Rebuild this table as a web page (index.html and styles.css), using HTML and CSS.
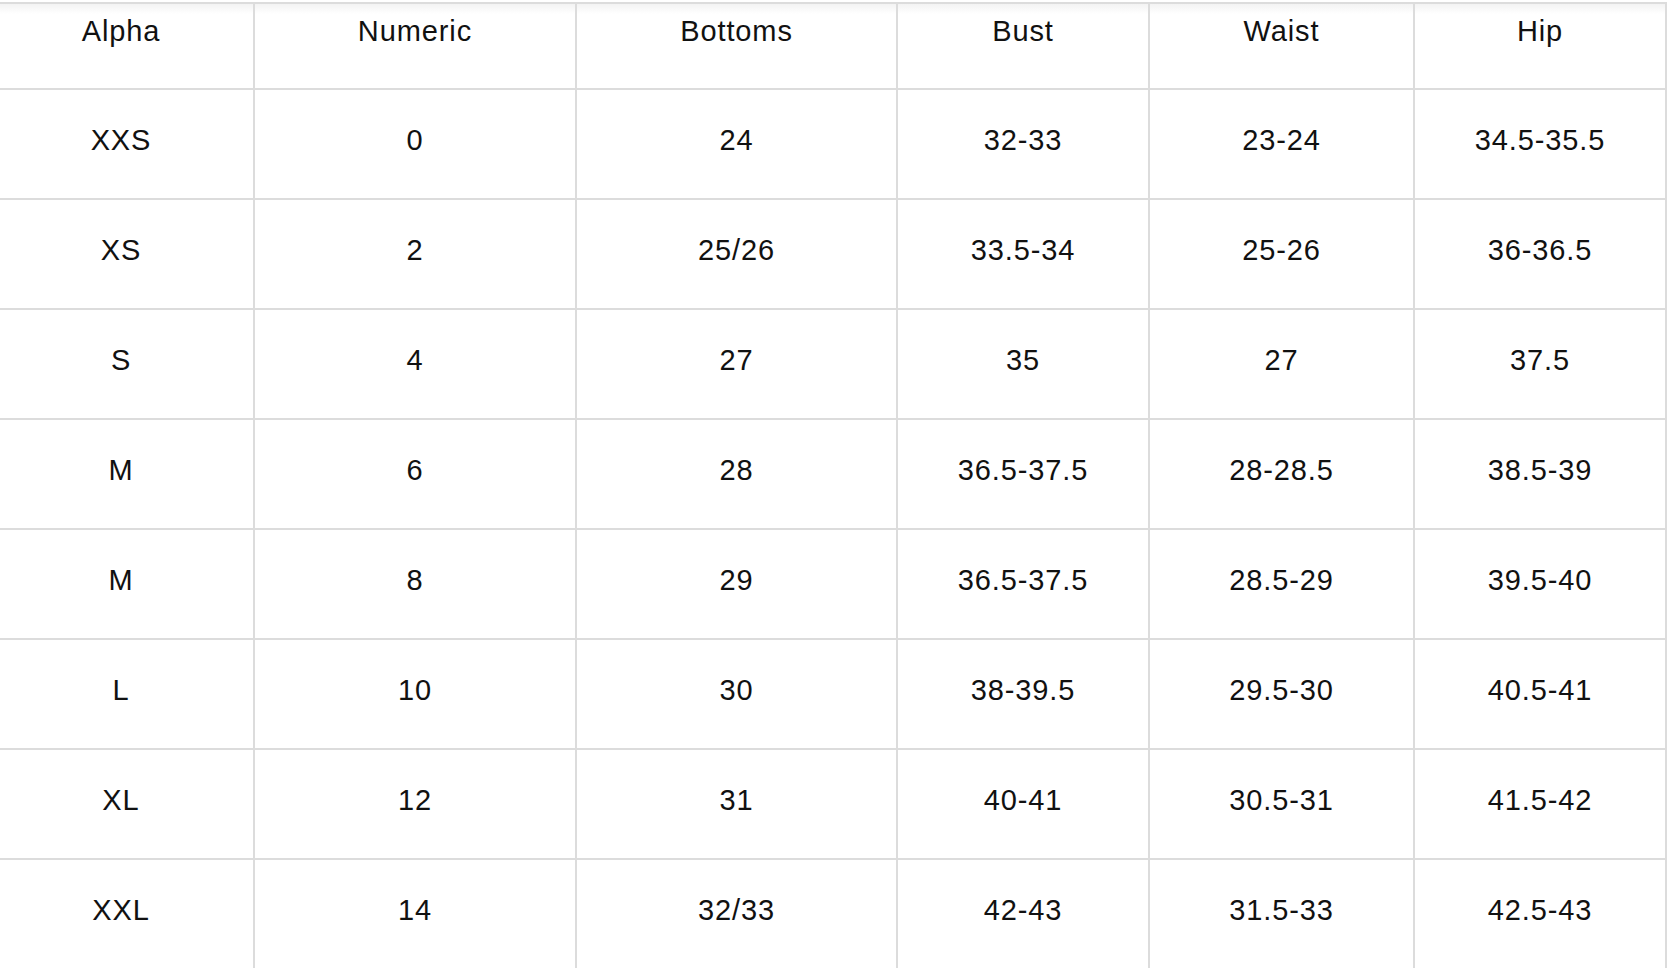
FILE: index.html
```html
<!DOCTYPE html>
<html lang="en">
<head>
<meta charset="utf-8">
<title>Size chart</title>
<link rel="stylesheet" href="styles.css">
</head>
<body>
<div class="wrap">
<table class="chart">
  <colgroup>
    <col class="c1"><col class="c2"><col class="c3"><col class="c4"><col class="c5"><col class="c6">
  </colgroup>
  <thead>
    <tr><th>Alpha</th><th>Numeric</th><th>Bottoms</th><th>Bust</th><th>Waist</th><th>Hip</th></tr>
  </thead>
  <tbody>
    <tr><td>XXS</td><td>0</td><td>24</td><td>32-33</td><td>23-24</td><td>34.5-35.5</td></tr>
    <tr><td>XS</td><td>2</td><td>25/26</td><td>33.5-34</td><td>25-26</td><td>36-36.5</td></tr>
    <tr><td>S</td><td>4</td><td>27</td><td>35</td><td>27</td><td>37.5</td></tr>
    <tr><td>M</td><td>6</td><td>28</td><td>36.5-37.5</td><td>28-28.5</td><td>38.5-39</td></tr>
    <tr><td>M</td><td>8</td><td>29</td><td>36.5-37.5</td><td>28.5-29</td><td>39.5-40</td></tr>
    <tr><td>L</td><td>10</td><td>30</td><td>38-39.5</td><td>29.5-30</td><td>40.5-41</td></tr>
    <tr><td>XL</td><td>12</td><td>31</td><td>40-41</td><td>30.5-31</td><td>41.5-42</td></tr>
    <tr><td>XXL</td><td>14</td><td>32/33</td><td>42-43</td><td>31.5-33</td><td>42.5-43</td></tr>
  </tbody>
</table>
</div>
</body>
</html>
```

FILE: styles.css
```css
html, body {
  margin: 0;
  padding: 0;
  background: #ffffff;
  overflow: hidden;
}

.wrap {
  padding-top: 2px;
  margin-left: -13px;
}

.chart {
  border-collapse: collapse;
  table-layout: fixed;
  width: 1678px;
  font-family: "Liberation Sans", Arial, sans-serif;
  font-size: 29px;
  line-height: 34px;
  letter-spacing: 0.9px;
  color: #111111;
}

.c1 { width: 266px; }
.c2 { width: 322px; }
.c3 { width: 321px; }
.c4 { width: 252px; }
.c5 { width: 265px; }
.c6 { width: 252px; }

.chart th,
.chart td {
  border: 2px solid #dcdcdc;
  text-align: center;
  vertical-align: top;
  padding: 0;
  font-weight: 400;
}

.chart th {
  height: 86px;
  padding-top: 10px;
  box-sizing: border-box;
  background: linear-gradient(to bottom, #f3f3f3 0px, #ffffff 10px);
}

.chart td {
  height: 110px;
  padding-top: 33px;
  box-sizing: border-box;
}
```
